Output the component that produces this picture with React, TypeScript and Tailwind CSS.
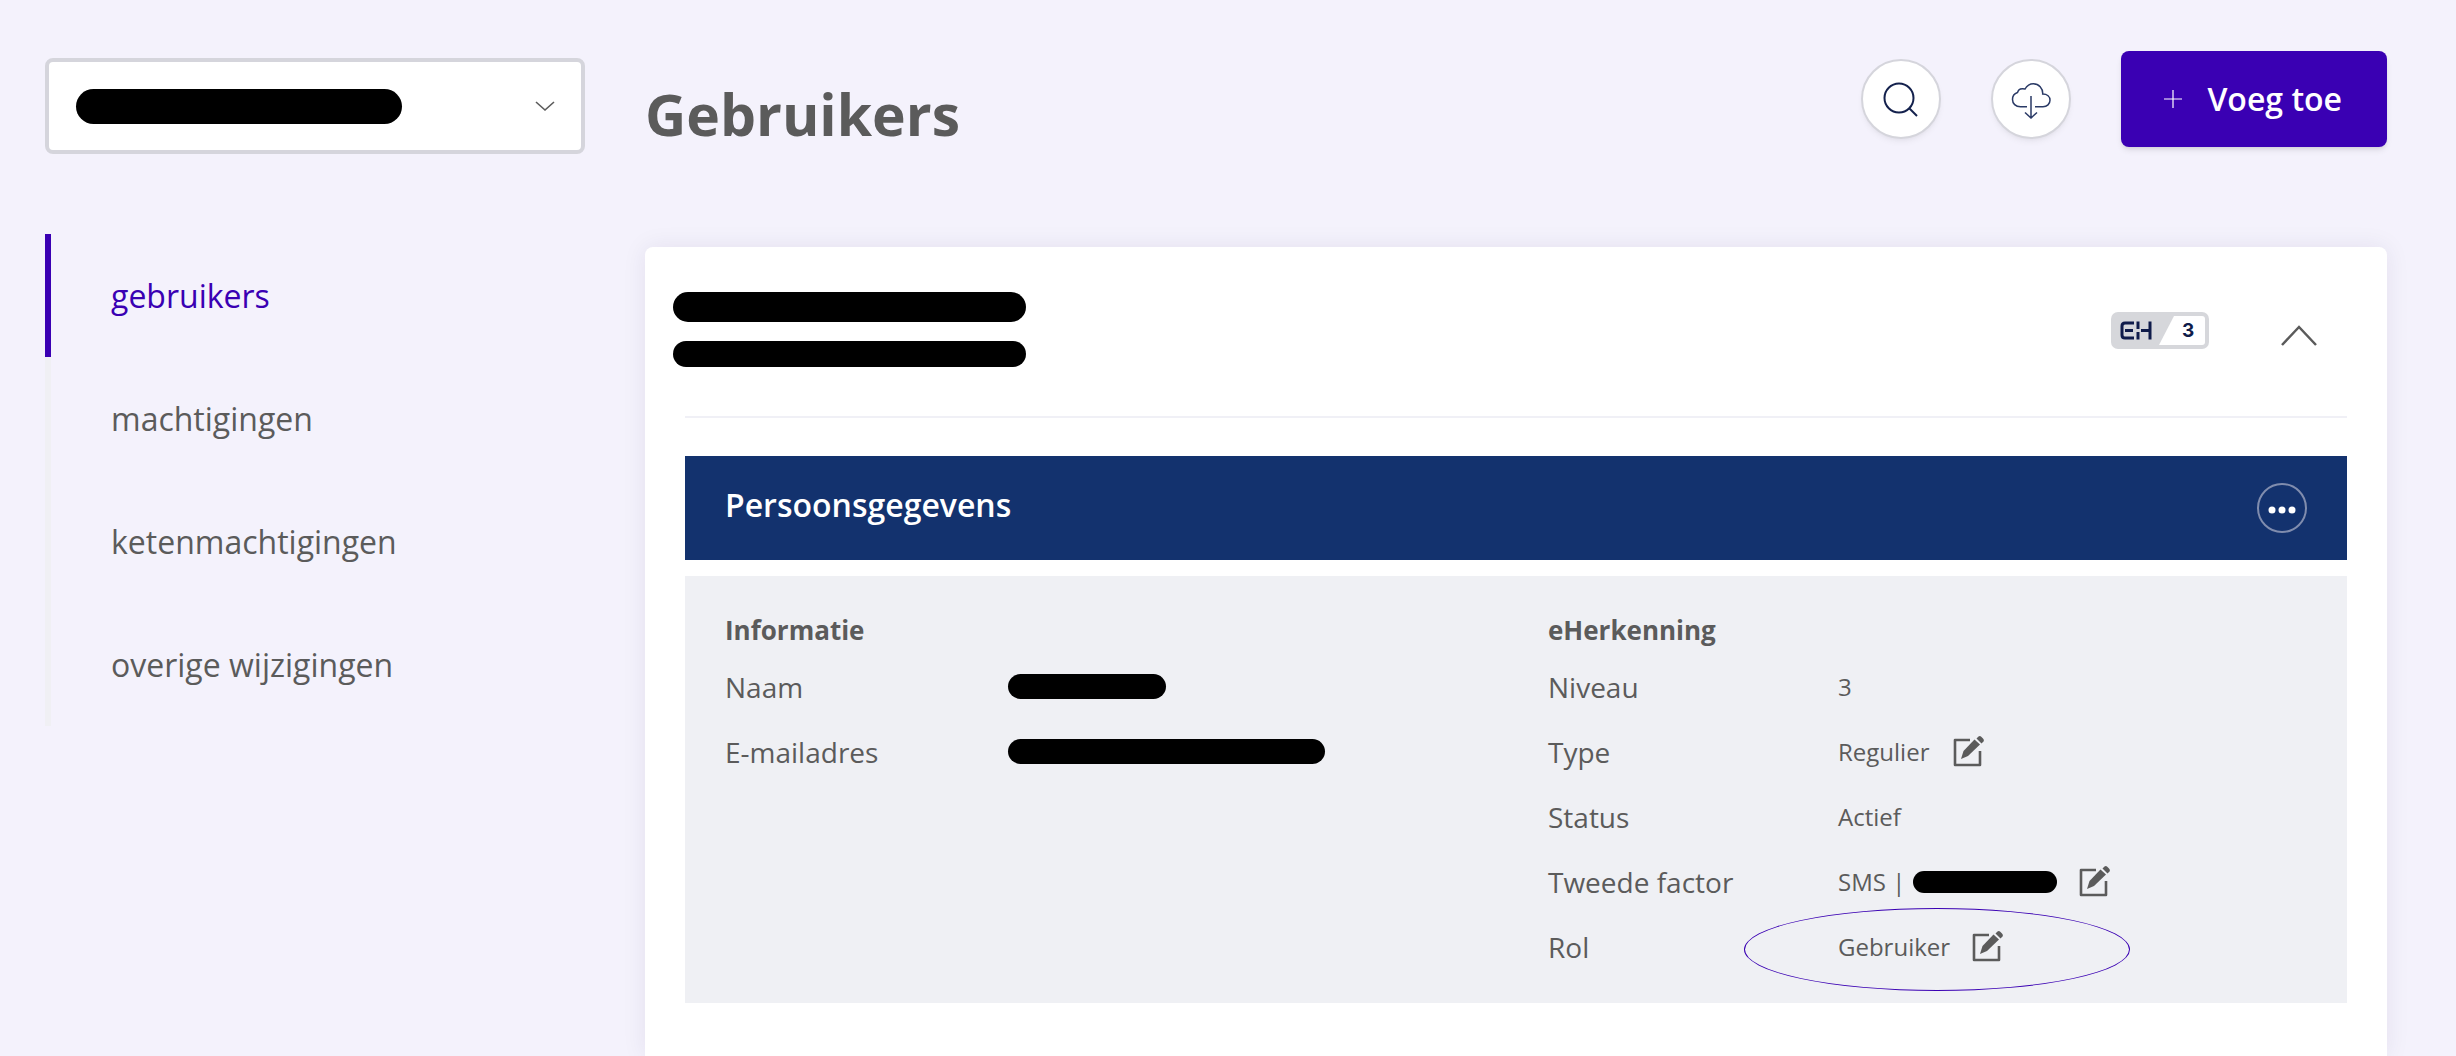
import type { ReactNode } from "react"

const Redacted = ({ className }: { className: string }) => (
    <span className={`block rounded-full bg-black ${className}`}></span>
)

const EditButton = ({ label }: { label: string }) => (
    <button type="button" aria-label={label} className="cursor-pointer">
        <svg className="h-8 w-8" viewBox="0 0 32 32" fill="none">
            <path d="M17 4H2V29H27V15" stroke="#5b5b5b" strokeWidth="2.600" strokeLinejoin="round" />
            <path d="M8 23l2.500-8L21.500 3.500l5.500 5L15 20z" fill="#5b5b5b" />
            <path d="M23.500 2.500l2-2q1.500-1 3 .5l1.500 1.500q1.500 1.500 .5 3l-2 2z" fill="#5b5b5b" />
        </svg>
    </button>
)

const Row = ({ label, children }: { label: string; children: ReactNode }) => (
    <div className="flex h-[65px] items-center">
        <dt className="w-[283px] shrink-0 text-[28px] leading-10">{label}</dt>
        <dd className="flex items-center text-2xl leading-10">{children}</dd>
    </div>
)

const menu = ["gebruikers", "machtigingen", "ketenmachtigingen", "overige wijzigingen"]

const Sidebar = () => (
    <aside className="w-[540px] shrink-0 pt-[58px]">
        <div className="relative">
            <select aria-label="Organisatie" className="h-24 w-full appearance-none rounded-lg border-4 border-[#d5d5dc] bg-white"></select>
            <div className="pointer-events-none absolute inset-0 flex items-center justify-between pr-[30px] pl-[31px]">
                <Redacted className="h-[35px] w-[326px]" />
                <svg className="h-3 w-5" viewBox="0 0 20 12" fill="none" stroke="#5b5b5b" strokeWidth="1.600">
                    <path d="M1 2l9 8 9-8" />
                </svg>
            </div>
        </div>
        <nav className="mt-20">
            <ul>
                {menu.map((item, i) => (
                    <li key={item}>
                        <a
                            href="#"
                            className={
                                i === 0
                                    ? "flex h-[123px] items-center border-l-6 border-[#3a00b3] pl-[60px] text-[32px] text-[#3a00b3]"
                                    : "flex h-[123px] items-center border-l-6 border-[#f0f0f4] pl-[60px] text-[32px]"
                            }
                        >
                            {item}
                        </a>
                    </li>
                ))}
            </ul>
        </nav>
    </aside>
)

const Header = () => (
    <header className="flex h-[247px] items-start">
        <h1 className="pt-[74px] text-[57px] leading-[80px] font-bold">Gebruikers</h1>
        <div className="ml-auto flex items-center gap-[50px] pt-[51px]">
            <button type="button" aria-label="Zoeken" className="flex h-20 w-20 items-center justify-center rounded-full border-2 border-[#d5d5dc] bg-white shadow-md shadow-black/5">
                <svg className="h-9 w-9" viewBox="0 0 36 36" fill="none" stroke="#14214d" strokeWidth="2">
                    <circle cx="16" cy="17" r="14.500" />
                    <path d="M26 27l8 8" />
                </svg>
            </button>
            <button type="button" aria-label="Downloaden" className="flex h-20 w-20 items-center justify-center rounded-full border-2 border-[#d5d5dc] bg-white shadow-md shadow-black/5">
                <svg className="h-10 w-10" viewBox="0 0 40 40" fill="none" stroke="#2a3a66" strokeWidth="1.500">
                    <path d="M16 27.700H9.500C4.500 27.700 1.500 24.500 1.500 20.500c0-3 2-6 5-7 1-3.500 4-4.500 7.500-3.500 2-3.500 5-5.300 8.300-5.300 5.500 0 9.700 4.500 9.400 10.300 4.500 0 7.300 2.700 7.300 6.300s-3 6.400-7 6.400h-8" />
                    <path d="M20 17v22M14 33.500l6 5.500 6-5.500" />
                </svg>
            </button>
            <button type="button" className="flex h-24 items-center rounded-lg bg-[#3a00b3] pr-[45px] pl-[43px] text-[32px] font-semibold text-white shadow-md">
                <svg className="mr-[25px] h-[18px] w-[18px]" viewBox="0 0 18 18" stroke="#fff" strokeWidth="1.200">
                    <path d="M9 0v18M0 9h18" />
                </svg>
                Voeg toe
            </button>
        </div>
    </header>
)

const LevelBadge = () => (
    <svg className="h-[37px] w-[98px]" viewBox="0 0 98 37" role="img" aria-label="eHerkenning niveau 3">
        <rect width="98" height="37" rx="7" fill="#d6d7db" />
        <path d="M63 4h28a3 3 0 0 1 3 3v23a3 3 0 0 1-3 3H48z" fill="#fff" />
        <path d="M23 11h-9q-3 0-3 3v9q0 3 3 3h9M14 18.500h8M27 9.500v7.500M27 20v7.500M30 18.500h9M39 9.500v18" fill="none" stroke="#0f1b4a" strokeWidth="3" />
        <text x="71" y="25" fontSize="19" fontWeight="700" fill="#0f1b4a" fontFamily="Inter, sans-serif">3</text>
    </svg>
)

const Details = () => (
    <div className="mt-4 grid grid-cols-2 gap-16 bg-[#eff0f4] px-10 pt-[34px] pb-6">
        <section>
            <h3 className="text-[26px] leading-10 font-bold">Informatie</h3>
            <dl className="mt-1">
                <Row label="Naam"><Redacted className="h-[25px] w-[158px]" /></Row>
                <Row label="E-mailadres"><Redacted className="h-[25px] w-[317px]" /></Row>
            </dl>
        </section>
        <section>
            <h3 className="text-[26px] leading-10 font-bold">eHerkenning</h3>
            <dl className="mt-1 [&_dt]:w-[290px]">
                <Row label="Niveau">3</Row>
                <Row label="Type">
                    <span className="mr-6">Regulier</span>
                    <EditButton label="Type wijzigen" />
                </Row>
                <Row label="Status">Actief</Row>
                <Row label="Tweede factor">
                    <span className="mr-2">SMS |</span>
                    <Redacted className="mr-[22px] h-[22px] w-36" />
                    <EditButton label="Tweede factor wijzigen" />
                </Row>
                <div className="relative">
                    <Row label="Rol">
                        <span className="mr-[22px]">Gebruiker</span>
                        <EditButton label="Rol wijzigen" />
                    </Row>
                    <span className="pointer-events-none absolute -top-1.5 left-[196px] h-[83px] w-[386px] rounded-[50%] border border-[#3a00b3]"></span>
                </div>
            </dl>
        </section>
    </div>
)

export default function App() {
    return (
        <div className="flex min-h-screen gap-[60px] bg-[#f4f2fc] pr-[69px] pl-[45px] font-['Open_Sans',sans-serif] text-[#5b5b5b]">
            <Sidebar />
            <main className="flex grow flex-col">
                <Header />
                <div className="grow rounded-t-lg bg-white px-10 shadow-[0_0_24px_rgba(40,30,80,0.08)]">
                    <div className="-ml-3 flex h-[169px] items-start pr-[30px]">
                        <div className="flex flex-col gap-[19px] pt-[45px]">
                            <Redacted className="h-[30px] w-[353px]" />
                            <Redacted className="h-[26px] w-[353px]" />
                        </div>
                        <div className="ml-auto flex items-center gap-[72px] pt-[65px]">
                            <LevelBadge />
                            <button type="button" aria-label="Inklappen" className="pt-2">
                                <svg className="h-6 w-9" viewBox="0 0 36 24" fill="none" stroke="#5b5b5b" strokeWidth="2.500">
                                    <path d="M1 22L18 4l17 18" />
                                </svg>
                            </button>
                        </div>
                    </div>
                    <hr className="border-t-2 border-[#f0f0f6]" />
                    <div className="mt-[38px] flex h-[104px] items-center justify-between bg-[#13326e] px-10">
                        <h2 className="pb-1.5 text-[32px] font-semibold text-white">Persoonsgegevens</h2>
                        <button type="button" aria-label="Meer opties" className="flex h-[50px] w-[50px] items-center justify-center rounded-full border-2 border-[#808dae] pt-1">
                            <svg className="h-2 w-7" viewBox="0 0 28 8" fill="#fff">
                                <circle cx="4" cy="4" r="3.500" />
                                <circle cx="14" cy="4" r="3.500" />
                                <circle cx="24" cy="4" r="3.500" />
                            </svg>
                        </button>
                    </div>
                    <Details />
                </div>
            </main>
        </div>
    )
}
